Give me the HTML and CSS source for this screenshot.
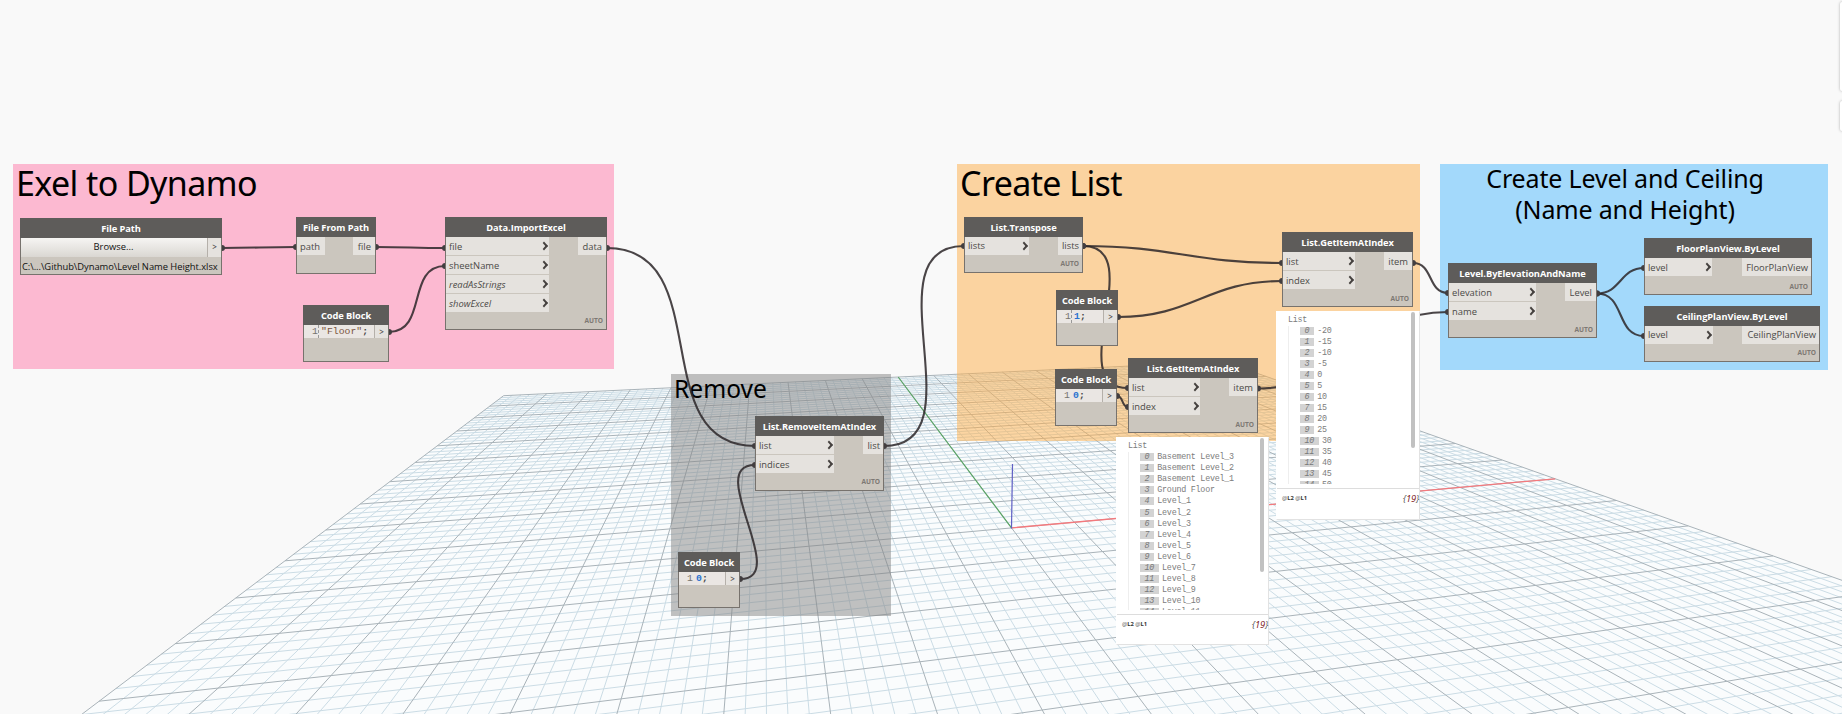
FILE: index.html
```
<!DOCTYPE html>
<html lang="en">
<head>
<meta charset="utf-8">
<title>Dynamo workspace</title>
<link rel="stylesheet" href="styles.css">
</head>
<body>
<main class="workspace">
  <svg class="layer" id="floor" viewBox="0 0 1842 714"></svg>

  <section class="group g-excel"><h2>Exel to Dynamo</h2></section>
  <section class="group g-remove"><h2>Remove</h2></section>
  <section class="group g-list"><h2>Create List</h2></section>
  <section class="group g-level"><h2><span class="t1">Create Level and Ceiling</span><br><span class="t2">(Name and Height)</span></h2></section>

  <svg class="layer" id="wires" viewBox="0 0 1842 714"></svg>

  <article class="node n-path">
    <header>File Path</header>
    <div class="browse"><span class="button">Browse...</span><span class="arrow">&gt;</span></div>
    <div class="file">C:\...\Github\Dynamo\Level Name Height.xlsx</div>
  </article>

  <article class="node n-from">
    <header>File From Path</header>
    <div class="ports"><div class="in"><p>path</p></div><div class="out">file</div></div>
  </article>

  <article class="node n-import">
    <header>Data.ImportExcel</header>
    <div class="ports">
      <div class="in"><p>file<i></i></p><p>sheetName<i></i></p><p class="opt">readAsStrings<i></i></p><p class="opt">showExcel<i></i></p></div>
      <div class="out">data</div>
    </div>
    <footer>AUTO</footer>
  </article>

  <article class="node code n-floor">
    <header>Code Block</header>
    <div class="line"><span class="num bar">1</span><span class="src"><b class="str">"Floor"</b>;</span><span class="arrow">&gt;</span></div>
  </article>

  <article class="node n-removeat">
    <header>List.RemoveItemAtIndex</header>
    <div class="ports"><div class="in"><p>list<i></i></p><p>indices<i></i></p></div><div class="out">list</div></div>
    <footer>AUTO</footer>
  </article>

  <article class="node code n-zero">
    <header>Code Block</header>
    <div class="line"><span class="num">1</span><span class="src"><b>0</b>;</span><span class="arrow">&gt;</span></div>
  </article>

  <article class="node n-transpose">
    <header>List.Transpose</header>
    <div class="ports"><div class="in"><p>lists<i></i></p></div><div class="out">lists</div></div>
    <footer>AUTO</footer>
  </article>

  <article class="node code n-one">
    <header>Code Block</header>
    <div class="line"><span class="num bar">1</span><span class="src"><b>1</b>;</span><span class="arrow">&gt;</span></div>
  </article>

  <article class="node code n-zero2">
    <header>Code Block</header>
    <div class="line"><span class="num">1</span><span class="src"><b>0</b>;</span><span class="arrow">&gt;</span></div>
  </article>

  <article class="node n-get1">
    <header>List.GetItemAtIndex</header>
    <div class="ports"><div class="in"><p>list<i></i></p><p>index<i></i></p></div><div class="out">item</div></div>
    <footer>AUTO</footer>
  </article>

  <article class="node n-get2">
    <header>List.GetItemAtIndex</header>
    <div class="ports"><div class="in"><p>list<i></i></p><p>index<i></i></p></div><div class="out">item</div></div>
    <footer>AUTO</footer>
  </article>

  <article class="node n-bylevel">
    <header>Level.ByElevationAndName</header>
    <div class="ports"><div class="in"><p>elevation<i></i></p><p>name<i></i></p></div><div class="out">Level</div></div>
    <footer>AUTO</footer>
  </article>

  <article class="node n-floorplan">
    <header>FloorPlanView.ByLevel</header>
    <div class="ports"><div class="in"><p>level<i></i></p></div><div class="out">FloorPlanView</div></div>
    <footer>AUTO</footer>
  </article>

  <article class="node n-ceiling">
    <header>CeilingPlanView.ByLevel</header>
    <div class="ports"><div class="in"><p>level<i></i></p></div><div class="out">CeilingPlanView</div></div>
    <footer>AUTO</footer>
  </article>

  <aside class="preview p-names">
    <div class="tree"><p>List</p>
      <ol>
        <li><em>0</em>Basement Level_3</li><li><em>1</em>Basement Level_2</li><li><em>2</em>Basement Level_1</li>
        <li><em>3</em>Ground Floor</li><li><em>4</em>Level_1</li><li class="step"><em>5</em>Level_2</li><li><em>6</em>Level_3</li>
        <li><em>7</em>Level_4</li><li><em>8</em>Level_5</li><li><em>9</em>Level_6</li><li><em>10</em>Level_7</li>
        <li><em>11</em>Level_8</li><li><em>12</em>Level_9</li><li><em>13</em>Level_10</li><li><em>14</em>Level_11</li>
      </ol>
    </div>
    <div class="summary"><span>@<b>L2</b> @<b>L1</b></span><span class="count">{<b>19</b>}</span></div>
    <div class="thumb"></div>
  </aside>

  <aside class="preview p-heights">
    <div class="tree"><p>List</p>
      <ol>
        <li><em>0</em>-20</li><li><em>1</em>-15</li><li><em>2</em>-10</li><li><em>3</em>-5</li><li><em>4</em>0</li>
        <li><em>5</em>5</li><li><em>6</em>10</li><li><em>7</em>15</li><li><em>8</em>20</li><li><em>9</em>25</li>
        <li><em>10</em>30</li><li><em>11</em>35</li><li><em>12</em>40</li><li><em>13</em>45</li><li><em>14</em>50</li>
      </ol>
    </div>
    <div class="summary"><span>@<b>L2</b> @<b>L1</b></span><span class="count">{<b>19</b>}</span></div>
    <div class="thumb"></div>
  </aside>

  <div class="dock d1"></div>
  <div class="dock d2"></div>
</main>
<script src="scene.js"></script>
</body>
</html>
```
FILE: styles.css
```
* { box-sizing: border-box; }
body { margin: 0; background: #f9f9f9; font-family: "Open Sans", "Noto Sans", sans-serif; }
.workspace { position: relative; width: 1842px; height: 714px; overflow: hidden; }
.layer { position: absolute; inset: 0; width: 1842px; height: 714px; }
p, ol, h2 { margin: 0; padding: 0; }

/* floor and connectors */
.minor { stroke: #cbdce5; stroke-width: 1; fill: none; }
.major { stroke: #a9b3b9; stroke-width: 1; fill: none; }
.plane { fill: #fafcfd; }
.axis-x { stroke: #f4797d; stroke-width: 1.3; }
.axis-y { stroke: #5aa565; stroke-width: 1.2; }
.axis-z { stroke: #5f5fc4; stroke-width: 1.2; }
.wire { stroke: rgba(45, 40, 42, .86); stroke-width: 2.1; fill: none; }
.dot { fill: #423e40; }

/* groups */
.group { position: absolute; }
.group h2 { font: 400 34px/39px "Noto Sans", sans-serif; color: #000; white-space: nowrap; }
.g-excel { left: 13px; top: 164px; width: 601px; height: 205px; background: rgba(255, 121, 169, .5); }
.g-remove { left: 671px; top: 374px; width: 220px; height: 242px; background: rgba(131, 131, 131, .5); }
.g-list { left: 957px; top: 164px; width: 463px; height: 277px; background: rgba(253, 173, 71, .5); }
.g-level { left: 1440px; top: 164px; width: 388px; height: 206px; background: rgba(77, 185, 253, .5); text-align: center; }
.g-excel h2, .g-list h2 { padding-left: 3px; letter-spacing: -.6px; }
.g-remove h2 { font-size: 24.6px; line-height: 30px; padding-left: 3px; }
.g-level h2 { font-size: 25px; line-height: 31px; margin-top: -1px; padding-right: 18px; letter-spacing: -.16px; }

/* nodes */
.node { position: absolute; border: 1px solid #77726d; background: #cbc6be; color: #4c4a48; font-size: 9.4px; }
.node header { height: 20px; margin: -1px -1px 0; background: #5e5c5a; color: #fff; font-weight: 700; font-size: 9.3px; letter-spacing: -.07px; line-height: 21px; text-align: center; white-space: nowrap; }
.ports { display: flex; justify-content: space-between; align-items: flex-start; }
.in { display: grid; gap: 1px; }
.in p, .out { height: 18px; line-height: 19px; background: #e5e2de; padding: 0 4px 0 3px; white-space: nowrap; }
.in p { position: relative; }
.out { text-align: right; }
.opt { font-style: italic; }
.in i { position: absolute; right: 2px; top: 6px; width: 6px; height: 6px; border: solid #45413f; border-width: 2px 2px 0 0; transform: rotate(45deg) skew(4deg, 4deg); }
.node footer { position: absolute; right: 3px; bottom: 1px; font-size: 6.6px; line-height: 12px; font-weight: 700; color: #7d7873; }
.arrow { width: 14px; border-left: 1px solid #b5b0aa; text-align: center; font-size: 8px; font-weight: 600; color: #4c4a48; background: #e5e2de; }

.n-path { left: 20px; top: 218px; width: 202px; height: 57px; color: #111; }
.browse { display: flex; height: 19px; line-height: 18px; }
.browse .button { flex: 1; padding-right: 1px; text-align: center; background: linear-gradient(#f6f5f3, #dad7d2); }
.file { padding-left: 1px; line-height: 19px; white-space: nowrap; letter-spacing: -.04px; }
.n-from { left: 296px; top: 217px; width: 80px; height: 57px; }
.n-from .in { width: 28px; }
.n-from .out { width: 22px; padding-left: 0; }
.n-import { left: 445px; top: 217px; width: 162px; height: 113px; }
.n-import .in { width: 103px; }
.n-import .out { width: 28px; }
.n-import footer { bottom: 2px; }
.n-removeat { left: 755px; top: 416px; width: 129px; height: 75px; }
.n-removeat .in { width: 78px; }
.n-removeat .out { width: 20px; padding: 0 3px 0 0; }
.n-removeat footer { bottom: 2px; }
.n-transpose { left: 964px; top: 217px; width: 119px; height: 56px; }
.n-transpose .in { width: 64px; }
.n-transpose .out { width: 24px; padding-right: 3px; }
.n-transpose footer, .n-ceiling footer { bottom: 2px; }
.n-get1 { left: 1282px; top: 232px; width: 131px; height: 75px; }
.n-get2 { left: 1128px; top: 358px; width: 130px; height: 75px; }
.n-get1 .in, .n-get2 .in { width: 72px; }
.n-get2 .in { width: 71px; }
.n-get1 .out, .n-get2 .out { width: 28px; }
.n-bylevel { left: 1448px; top: 263px; width: 149px; height: 75px; }
.n-bylevel .in { width: 87px; }
.n-bylevel .out { width: 31px; }
.n-floorplan { left: 1644px; top: 238px; width: 168px; height: 57px; }
.n-floorplan .in { width: 67px; }
.n-floorplan .out { width: 69px; padding-right: 3px; }
.n-ceiling { left: 1644px; top: 306px; width: 176px; height: 56px; }
.n-ceiling .in { width: 68px; }
.n-ceiling .out { width: 77px; padding-right: 3px; }
.n-transpose .ports p, .n-transpose .out, .n-ceiling .ports p, .n-ceiling .out { line-height: 18px; }

/* code blocks */
.line { display: flex; height: 13px; line-height: 13px; background: #eae6e3; font-family: "Liberation Mono", monospace; font-size: 9.8px; }
.num { width: 15px; text-align: right; color: #77736f; padding-right: 1px; }
.bar { border-right: 1px dashed #999; padding-right: 0; }
.src { flex: 1; padding-left: 2px; font-weight: 700; color: #444; white-space: nowrap; }
.src b { color: #2a72d0; font-weight: 700; }
.src .str { color: #7a5540; font-weight: 400; }
.line .arrow { font-family: "Open Sans", sans-serif; }
.n-floor { left: 303px; top: 305px; width: 86px; height: 57px; }
.n-zero { left: 678px; top: 552px; width: 62px; height: 56px; }
.n-one { left: 1056px; top: 290px; width: 62px; height: 56px; }
.n-zero2 { left: 1055px; top: 369px; width: 62px; height: 57px; }

/* previews */
.preview { position: absolute; background: #fff; border: 1px solid #e2e2e2; border-left-color: #fff; border-top-color: #fff; font: 8.4px/11px "Liberation Mono", monospace; letter-spacing: -.24px; color: #7c7c7c; }
.p-heights { left: 1276px; top: 311px; width: 144px; height: 209px; }
.p-names { left: 1116px; top: 437px; width: 153px; height: 208px; }
.tree { height: 172px; padding: 3px 0 0 11px; overflow: hidden; }
.p-names .tree { height: 172px; padding-top: 3px; }
.tree ol { list-style: none; border-left: 1px solid #eee; padding-left: 11px; }
.tree li { height: 11px; white-space: pre; }
.tree .step { margin-top: 1px; }
.tree em { display: inline-block; height: 8px; line-height: 8px; padding: 0 4.5px; margin-right: 3.5px; background: #d3d3d3; color: #777; }
.summary { border-top: 1px solid #ddd; margin-top: 4px; padding: 3px 0 0 5px; display: flex; justify-content: space-between; font: 5.8px/13px "Open Sans", sans-serif; letter-spacing: 0; color: #555; }
.summary b { color: #333; }
.summary .count { font-size: 9.3px; font-style: italic; letter-spacing: -.2px; color: #555; }
.summary .count b { font-weight: 400; color: #7a1418; }
.thumb { position: absolute; right: 4px; top: 0; width: 4px; height: 136px; border-radius: 2px; background: #c1c1c1; }
.p-names .thumb { height: 134px; }

.dock { position: absolute; left: 1840px; width: 12px; background: #fff; border-radius: 2px; box-shadow: 0 0 3px rgba(0, 0, 0, .3); }
.d1 { top: 2px; height: 89px; }
.d2 { top: 101px; height: 30px; }
```
FILE: scene.js
```
// Perspective projection of floor coordinates (major grid units) to the canvas.
function project(u, v) {
  const w = 0.01053 * u - 0.05067 * v + 1;
  return [(48.92 * u - 38.73 * v + 503.6) / w, (2.1 * u - 10.07 * v + 395.7) / w];
}
function seg(u1, v1, u2, v2) {
  const a = project(u1, v1), b = project(u2, v2);
  return `M${a[0].toFixed(1)} ${a[1].toFixed(1)}L${b[0].toFixed(1)} ${b[1].toFixed(1)}`;
}
const U = 20, V = 18.6;
let minor = '', major = '';
for (let i = 0; i <= U * 5; i++) {
  const d = seg(i / 5, 0, i / 5, V);
  if (i % 5) minor += d; else major += d;
}
for (let i = 0; i <= V * 5; i++) {
  const d = seg(0, i / 5, U, i / 5);
  if (i % 5) minor += d; else major += d;
}
const plane = [[0, 0], [U, 0], [U, V], [0, V]].map(p => project(p[0], p[1]).join(',')).join(' ');
document.getElementById('floor').innerHTML =
  `<polygon class="plane" points="${plane}"/>` +
  `<path class="minor" d="${minor}"/><path class="major" d="${major}"/>` +
  `<path class="axis-x" d="${seg(10, 10, 20, 10)}"/>` +
  `<path class="axis-y" d="${seg(10, 0, 10, 10)}"/>` +
  `<path class="axis-z" d="M1012.5 464L1011.5 528.5"/>`;

// Connectors: start x, y, end x, y.
const links = [
  [222, 248, 296, 247], [376, 247, 445, 248], [389, 332, 445, 266],
  [607, 248, 755, 446], [740, 579, 755, 465], [884, 446, 964, 246],
  [1083, 246, 1282, 263], [1083, 246, 1128, 388], [1118, 317, 1282, 281],
  [1117, 396, 1128, 407], [1413, 263, 1448, 293], [1258, 388.5, 1448, 312],
  [1597, 293.5, 1644, 268], [1597, 293.5, 1644, 336]
];
document.getElementById('wires').innerHTML = links.map(([x1, y1, x2, y2]) => {
  const k = 0.45 * Math.hypot(x2 - x1, y2 - y1);
  return `<path class="wire" d="M${x1} ${y1}C${x1 + k} ${y1} ${x2 - k} ${y2} ${x2} ${y2}"/>` +
    `<circle class="dot" cx="${x1}" cy="${y1}" r="3"/><circle class="dot" cx="${x2}" cy="${y2}" r="3"/>`;
}).join('');
```
